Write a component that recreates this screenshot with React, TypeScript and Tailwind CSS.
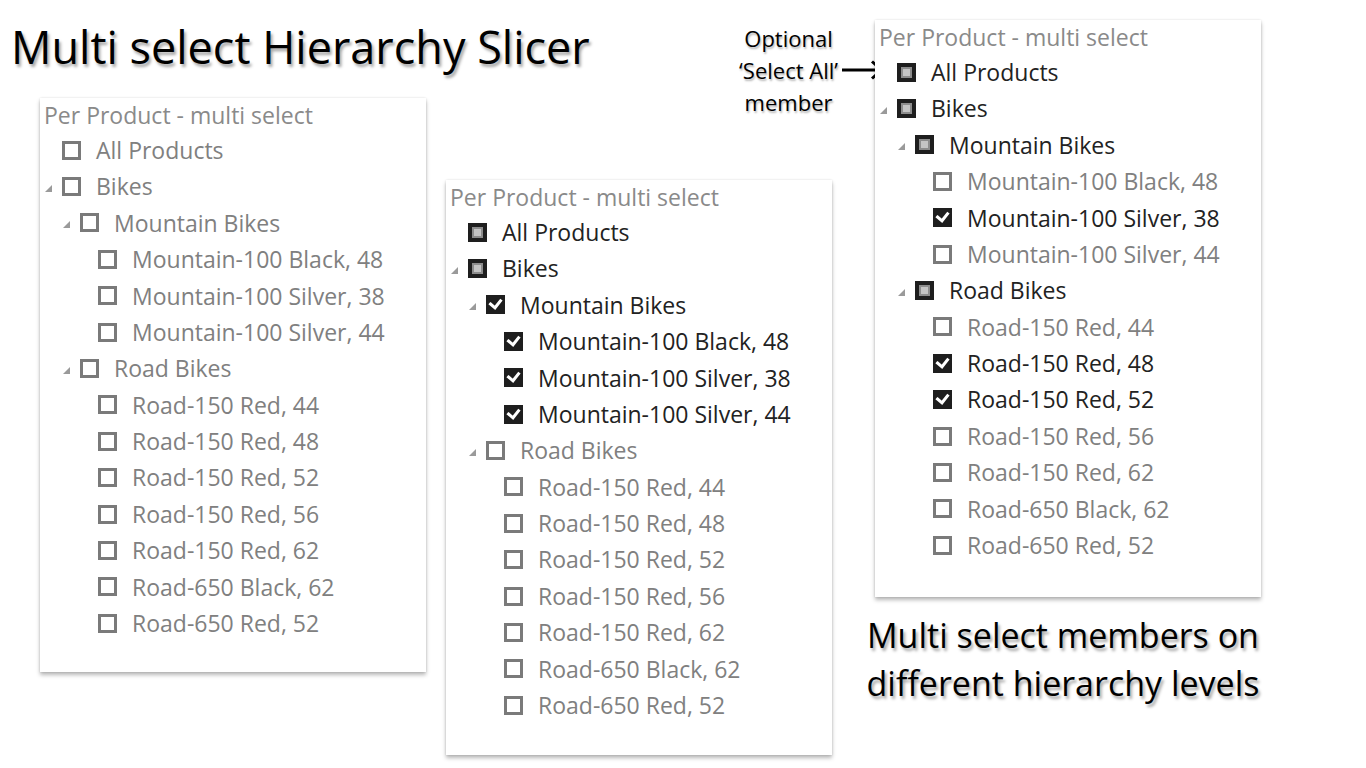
type State = 'off' | 'part' | 'on'

type Item = { label: string; level: number; state: State; arrow?: boolean }

const names = [
  'Mountain-100 Black, 48',
  'Mountain-100 Silver, 38',
  'Mountain-100 Silver, 44',
]
const roads = [
  'Road-150 Red, 44',
  'Road-150 Red, 48',
  'Road-150 Red, 52',
  'Road-150 Red, 56',
  'Road-150 Red, 62',
  'Road-650 Black, 62',
  'Road-650 Red, 52',
]

function build(top: State[], mountain: State[], road: State[]): Item[] {
  return [
    { label: 'All Products', level: 0, state: top[0] },
    { label: 'Bikes', level: 0, state: top[1], arrow: true },
    { label: 'Mountain Bikes', level: 1, state: top[2], arrow: true },
    ...names.map((n, i) => ({ label: n, level: 2, state: mountain[i] })),
    { label: 'Road Bikes', level: 1, state: top[3], arrow: true },
    ...roads.map((n, i) => ({ label: n, level: 2, state: road[i] })),
  ]
}

const off7: State[] = ['off', 'off', 'off', 'off', 'off', 'off', 'off']

const panel1 = build(['off', 'off', 'off', 'off'], ['off', 'off', 'off'], off7)
const panel2 = build(['part', 'part', 'on', 'off'], ['on', 'on', 'on'], off7)
const panel3 = build(
  ['part', 'part', 'part', 'part'],
  ['off', 'on', 'off'],
  ['off', 'on', 'on', 'off', 'off', 'off', 'off'],
)

function Box({ state }: { state: State }) {
  if (state === 'off') {
    return <div className="w-[19px] h-[19px] shrink-0 border-[3px] border-[#7a7a7a] bg-white" />
  }
  if (state === 'part') {
    return (
      <div className="w-[19px] h-[19px] shrink-0 bg-[#1e1e1e] flex items-center justify-center">
        <div className="w-[11px] h-[11px] border-2 border-[#8c8c8c] bg-[#c4c4c4]" />
      </div>
    )
  }
  return (
    <div className="w-[19px] h-[19px] shrink-0 bg-[#1e1e1e] flex items-center justify-center">
      <svg width="15" height="15" viewBox="0 0 15 15" fill="none">
        <path d="M2.5 7l4.5 3.8 5.5-7" stroke="white" strokeWidth="3" strokeLinecap="square" />
      </svg>
    </div>
  )
}

function Slicer({ items, className }: { items: Item[]; className: string }) {
  return (
    <div
      className={`w-[386px] shrink-0 bg-white shadow-[0_0_2px_rgba(0,0,0,0.12),0_3px_4px_rgba(0,0,0,0.28)] ${className}`}
    >
      <div className="h-[34px] pl-[4px] flex items-center text-[23px] text-[#8a8a8a] whitespace-nowrap">
        Per Product - multi select
      </div>
      {items.map((it, i) => (
        <div
          key={i}
          className="h-[36.4px] flex items-center"
          style={{ paddingLeft: 4 + it.level * 18 }}
        >
          <div className="w-[18px] shrink-0 flex items-center pl-[1px] pt-[4px]">
            {it.arrow && (
              <svg width="7" height="7" viewBox="0 0 7 7">
                <polygon points="7,0 7,7 0,7" fill="#9a9a9a" />
              </svg>
            )}
          </div>
          <Box state={it.state} />
          <span
            className={`ml-[15px] text-[23px] whitespace-nowrap ${
              it.state === 'off' ? 'text-[#808080]' : 'text-[#222222]'
            }`}
          >
            {it.label}
          </span>
        </div>
      ))}
    </div>
  )
}

export default function App() {
  return (
    <div
      className="w-[1366px] h-[768px] bg-white flex overflow-hidden"
      style={{ fontFamily: '"Open Sans", "Noto Sans", sans-serif' }}
    >
      {/* left column */}
      <div className="w-[446px] shrink-0 flex flex-col">
        <h1 className="mt-[16px] ml-[11px] h-[62px] text-[45px] leading-[62px] whitespace-nowrap text-black [text-shadow:2px_3px_3px_rgba(0,0,0,0.35)]">
          Multi select Hierarchy Slicer
        </h1>
        <Slicer items={panel1} className="ml-[40px] mt-[20px] h-[574px]" />
      </div>

      {/* middle column */}
      <div className="w-[429px] shrink-0 flex flex-col">
        <div className="mt-[20px] h-[100px] flex items-center justify-end">
          <div className="text-center text-[22px] leading-[32px] text-black whitespace-nowrap [text-shadow:1px_2px_2px_rgba(0,0,0,0.3)]">
            <div>Optional</div>
            <div>‘Select All’</div>
            <div>member</div>
          </div>
          <svg width="44" height="22" viewBox="0 0 44 22" className="ml-[3px] mr-[-10px] shrink-0">
            <path d="M1 11h40M31 2.5l9.5 8.5-9.5 8.5" stroke="black" strokeWidth="3" fill="none" />
          </svg>
        </div>
        <Slicer items={panel2} className="mt-[60px] h-[575px]" />
      </div>

      {/* right column */}
      <div className="w-[386px] shrink-0 flex flex-col">
        <Slicer items={panel3} className="mt-[20px] h-[577px]" />
        <div className="mt-[14px] ml-[-20px] w-[416px] text-center text-[34px] leading-[48px] whitespace-nowrap text-black [text-shadow:2px_3px_3px_rgba(0,0,0,0.35)]">
          <div>Multi select members on</div>
          <div>different hierarchy levels</div>
        </div>
      </div>
    </div>
  )
}
